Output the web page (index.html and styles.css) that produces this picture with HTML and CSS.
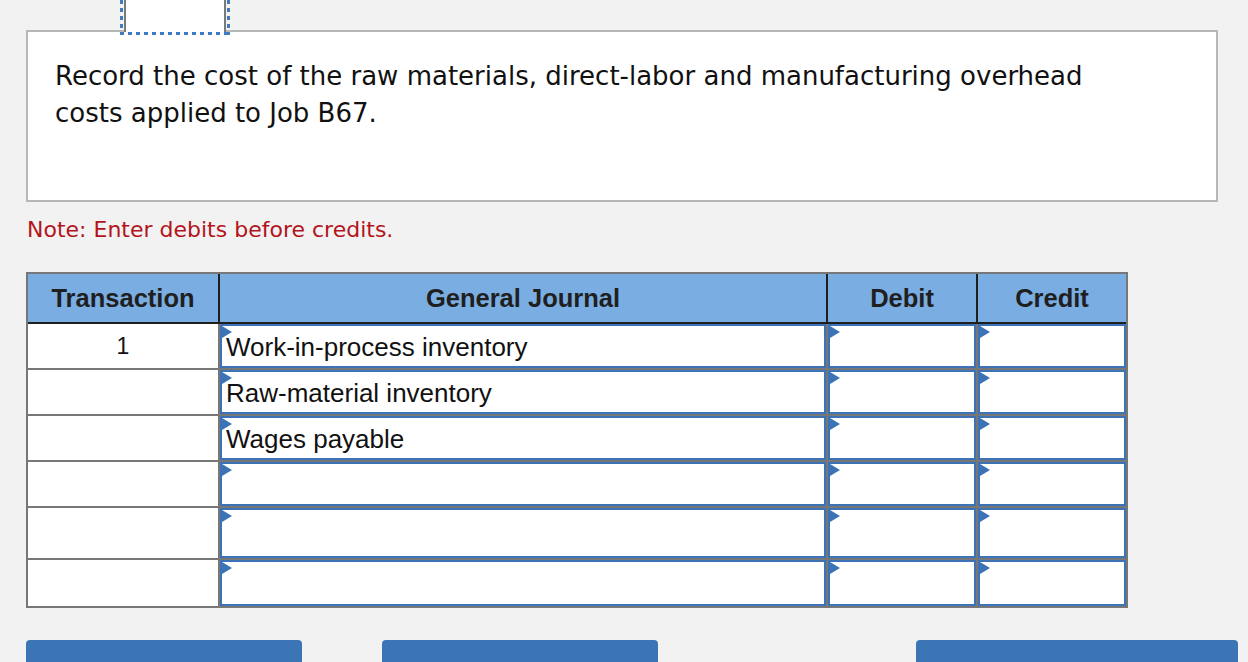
FILE: index.html
```html
<!DOCTYPE html>
<html lang="en">
<head>
<meta charset="utf-8">
<title>General Journal</title>
<link rel="stylesheet" href="styles.css">
</head>
<body>
<div class="page">
  <div class="question">
    <div class="tab"><div class="tab-inner"></div></div>
    <p class="prompt">Record the cost of the raw materials, direct-labor and manufacturing overhead costs applied to Job B67.</p>
  </div>
  <p class="note">Note: Enter debits before credits.</p>
  <div class="journal">
    <div class="jhead">
      <div class="hcell">Transaction</div>
      <div class="hcell">General Journal</div>
      <div class="hcell">Debit</div>
      <div class="hcell">Credit</div>
    </div>
    <div class="jbody">
      <div class="tcell">1</div>
      <div class="icell"><span>Work-in-process inventory</span></div>
      <div class="icell"></div>
      <div class="icell"></div>

      <div class="tcell"></div>
      <div class="icell"><span>Raw-material inventory</span></div>
      <div class="icell"></div>
      <div class="icell"></div>

      <div class="tcell"></div>
      <div class="icell"><span>Wages payable</span></div>
      <div class="icell"></div>
      <div class="icell"></div>

      <div class="tcell"></div>
      <div class="icell"></div>
      <div class="icell"></div>
      <div class="icell"></div>

      <div class="tcell"></div>
      <div class="icell"></div>
      <div class="icell"></div>
      <div class="icell"></div>

      <div class="tcell"></div>
      <div class="icell"></div>
      <div class="icell"></div>
      <div class="icell"></div>
    </div>
  </div>
  <div class="actions">
    <div class="btn btn-a"></div>
    <div class="btn btn-b"></div>
    <div class="btn btn-c"></div>
  </div>
</div>
</body>
</html>
```

FILE: styles.css
```css
html, body {
  margin: 0;
  padding: 0;
  background: #f2f2f2;
  overflow: hidden;
}

.page {
  padding: 30px 30px 0 26px;
}

.question {
  position: relative;
  box-sizing: border-box;
  height: 172px;
  background: #ffffff;
  border: 2px solid #b7b7b7;
  padding: 26px 27px 0 27px;
}

.tab {
  position: absolute;
  left: 92px;
  top: -32px;
  width: 110px;
  height: 35px;
  box-sizing: border-box;
  padding: 0 4px 3px 4px;
  background:
    repeating-linear-gradient(to bottom, #3f7cc4 0 4px, transparent 4px 8px) left top / 3px 100% no-repeat,
    repeating-linear-gradient(to bottom, #3f7cc4 0 4px, transparent 4px 8px) right top / 3px 100% no-repeat,
    repeating-linear-gradient(to right, #3f7cc4 0 4px, transparent 4px 8px) left bottom / 100% 3px no-repeat;
}

.tab-inner {
  height: 100%;
  background: #ffffff;
  border-left: 2px solid #7a7a7a;
  border-right: 2px solid #7a7a7a;
  box-sizing: border-box;
}

.prompt {
  margin: 0;
  max-width: 1050px;
  font-family: "DejaVu Sans", Verdana, sans-serif;
  font-size: 26px;
  line-height: 37px;
  color: #111111;
}

.note {
  margin: 13px 0 0 1px;
  height: 30px;
  font-family: "DejaVu Sans", Verdana, sans-serif;
  font-size: 22px;
  line-height: 30px;
  color: #b3141c;
}

.journal {
  margin-top: 27px;
  width: 1102px;
  box-sizing: border-box;
  border: 2px solid #777777;
  font-family: "Liberation Sans", Arial, sans-serif;
}

.jhead {
  display: grid;
  grid-template-columns: 190px 606px 148px 148px;
  column-gap: 2px;
  background: #1f1f1f;
  border-bottom: 2px solid #1f1f1f;
}

.hcell {
  height: 48px;
  background: #7aade2;
  color: #1f1f1f;
  font-weight: bold;
  font-size: 25.5px;
  display: flex;
  align-items: center;
  justify-content: center;
}

.jbody {
  display: grid;
  grid-template-columns: 190px 606px 148px 148px;
  grid-template-rows: 44px 44px 44px 44px 50px 46px;
  gap: 2px;
  background: #777777;
}

.tcell {
  background: #ffffff;
  display: flex;
  align-items: center;
  justify-content: center;
  font-size: 23px;
  color: #111111;
}

.icell {
  position: relative;
  background: #ffffff;
  border: 2px solid #3b73b6;
  display: flex;
  align-items: center;
  padding-left: 4px;
  font-size: 26px;
  color: #111111;
}

.icell::before {
  content: "";
  position: absolute;
  left: 0;
  top: 0;
  width: 0;
  height: 0;
  border-left: 10px solid #3b73b6;
  border-top: 6px solid transparent;
  border-bottom: 6px solid transparent;
}

.icell span {
  position: relative;
  top: 1px;
}

.actions {
  margin-top: 32px;
  margin-right: -20px;
  display: flex;
}

.btn {
  height: 40px;
  background: #3c75b5;
  border-radius: 4px 4px 0 0;
}

.btn-a {
  width: 276px;
}

.btn-b {
  width: 276px;
  margin-left: 80px;
}

.btn-c {
  width: 322px;
  margin-left: auto;
}
```
